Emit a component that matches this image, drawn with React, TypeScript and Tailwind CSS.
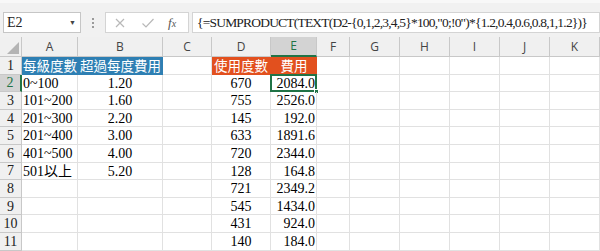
import React from "react";

const cols = ["A", "B", "C", "D", "E", "F", "G", "H", "I", "J", "K"];
const widths = [56, 85, 49, 59, 46, 33, 50, 50, 50, 50, 50];

const tiers = ["0~100", "101~200", "201~300", "201~400", "401~500", "501以上"];
const rates = ["1.20", "1.60", "2.20", "3.00", "4.00", "5.20"];
const usage = ["670", "755", "145", "633", "720", "128", "721", "545", "431", "140"];
const fees = ["2084.0", "2526.0", "192.0", "1891.6", "2344.0", "164.8", "2349.2", "1434.0", "924.0", "184.0"];

const serif = "font-['Liberation_Serif','Noto_Sans_CJK_TC',serif]";
const cjk = "font-['Noto_Sans_CJK_TC','Liberation_Serif',serif]";

function Cell({ row, col }: { row: number; col: number }) {
  const base = "h-full border-r border-b border-[#e1e1e1] text-[14px] leading-[17px] text-black whitespace-nowrap overflow-visible";
  if (row === 1) {
    if (col === 0)
      return <div className={`h-full bg-[#2e7fb3] text-white text-[13.5px] leading-[17px] pl-[1px] whitespace-nowrap ${cjk}`}>每級度數</div>;
    if (col === 1)
      return <div className={`h-full bg-[#2e7fb3] text-white text-[13.5px] leading-[17px] pl-[2px] whitespace-nowrap border-r border-[#2e7fb3] ${cjk}`}>超過每度費用</div>;
    if (col === 3)
      return <div className={`h-full bg-[#e2501e] text-white text-[13.5px] leading-[17px] pl-[2px] whitespace-nowrap ${cjk}`}>使用度數</div>;
    if (col === 4)
      return <div className={`h-full bg-[#e2501e] text-white text-[13.5px] leading-[17px] text-center whitespace-nowrap ${cjk}`}>費用</div>;
  }
  const i = row - 2;
  if (col === 0 && i >= 0 && i < tiers.length)
    return <div className={`${base} pl-[1px] ${serif}`}>{tiers[i]}</div>;
  if (col === 1 && i >= 0 && i < rates.length)
    return <div className={`${base} text-center ${serif}`}>{rates[i]}</div>;
  if (col === 3 && i >= 0 && i < usage.length)
    return <div className={`${base} text-center ${serif}`}>{usage[i]}</div>;
  if (col === 4 && i >= 0 && i < fees.length)
    return (
      <div className={`${base} relative text-right pr-[1px] ${serif}`}>
        {fees[i]}
        {row === 2 && (
          <div className="absolute -left-[1px] -top-[1px] right-[-1px] bottom-[-1px] border-2 border-[#217346]">
            <div className="absolute -right-[4px] -bottom-[4px] w-[5px] h-[5px] bg-[#217346] border border-white" />
          </div>
        )}
      </div>
    );
  return <div className={base} />;
}

export default function App() {
  const rows = Array.from({ length: 11 }, (_, k) => k + 1);
  return (
    <div className="w-[600px] h-[251px] overflow-hidden bg-white">
      <div className="h-[37px] bg-[#f1f1f1] border-t-[3px] border-[#f8f8f8] flex items-center pt-[5px]">
        <div className="ml-[3px] w-[78px] h-[21px] bg-white border border-[#c6c6c6] flex items-center justify-between px-[3px]">
          <span className="text-[14px] text-[#222] font-['Liberation_Serif',serif] leading-none">E2</span>
          <span className="text-[7px] text-[#444] leading-none mr-[1px]">▼</span>
        </div>
        <div className="w-[24px] flex flex-col items-center gap-[2px]">
          <span className="w-[2px] h-[2px] bg-[#9a9a9a]" />
          <span className="w-[2px] h-[2px] bg-[#9a9a9a]" />
          <span className="w-[2px] h-[2px] bg-[#9a9a9a]" />
        </div>
        <div className="w-[84px] h-[21px] bg-white border border-[#d4d4d4] flex items-center">
          <svg width="12" height="12" viewBox="0 0 12 12" className="ml-[8px]">
            <path d="M2 2 L10 10 M10 2 L2 10" stroke="#b8b8b8" strokeWidth="1.2" fill="none" />
          </svg>
          <svg width="14" height="12" viewBox="0 0 14 12" className="ml-[15px]">
            <path d="M1.5 6.5 L5 10 L12.5 2" stroke="#b8b8b8" strokeWidth="1.2" fill="none" />
          </svg>
          <span className="ml-[13px] text-[13px] italic text-[#555] font-['Liberation_Serif',serif] leading-none">
            f<span className="text-[10px]">x</span>
          </span>
        </div>
        <div className="ml-[3px] flex-1 h-[21px] bg-white border border-[#d4d4d4] flex items-center pl-[4px] overflow-hidden">
          <span className={`text-[13.5px] tracking-[-0.8px] text-[#222] whitespace-nowrap leading-none ${serif}`}>
            {'{=SUMPRODUCT(TEXT(D2-{0,1,2,3,4,5}*100,"0;!0")*{1.2,0.4,0.6,0.8,1,1.2})}'}
          </span>
        </div>
      </div>
      <div
        className="grid"
        style={{ gridTemplateColumns: `22px ${widths.map((w) => `${w}px`).join(" ")}`, gridTemplateRows: "20px repeat(11, 17.6px)" }}
      >
        <div className="relative bg-[#f0f0f0] border-r border-b border-[#c8c8c8]">
          <svg width="12" height="12" viewBox="0 0 12 12" className="absolute right-[2px] bottom-[2px]">
            <path d="M12 0 L12 12 L0 12 Z" fill="#b4b4b4" />
          </svg>
        </div>
        {cols.map((c) => (
          <div
            key={c}
            className={`flex items-center justify-center text-[12px] font-['Open_Sans',sans-serif] border-r ${
              c === "E"
                ? "bg-[#d3d3d3] text-[#217346] border-b-2 border-b-[#217346] border-r-[#c8c8c8]"
                : "bg-[#f0f0f0] text-[#444] border-b border-[#c8c8c8]"
            }`}
          >
            {c}
          </div>
        ))}
        {rows.map((r) => (
          <React.Fragment key={r}>
            <div
              className={`flex items-center justify-center text-[14px] border-b ${serif} ${
                r === 2
                  ? "bg-[#d3d3d3] text-[#217346] border-r-2 border-r-[#217346] border-b-[#c8c8c8]"
                  : "bg-[#f0f0f0] text-[#222] border-r border-[#c8c8c8]"
              }`}
            >
              {r}
            </div>
            {cols.map((c, ci) => (
              <Cell key={c} row={r} col={ci} />
            ))}
          </React.Fragment>
        ))}
      </div>
    </div>
  );
}
